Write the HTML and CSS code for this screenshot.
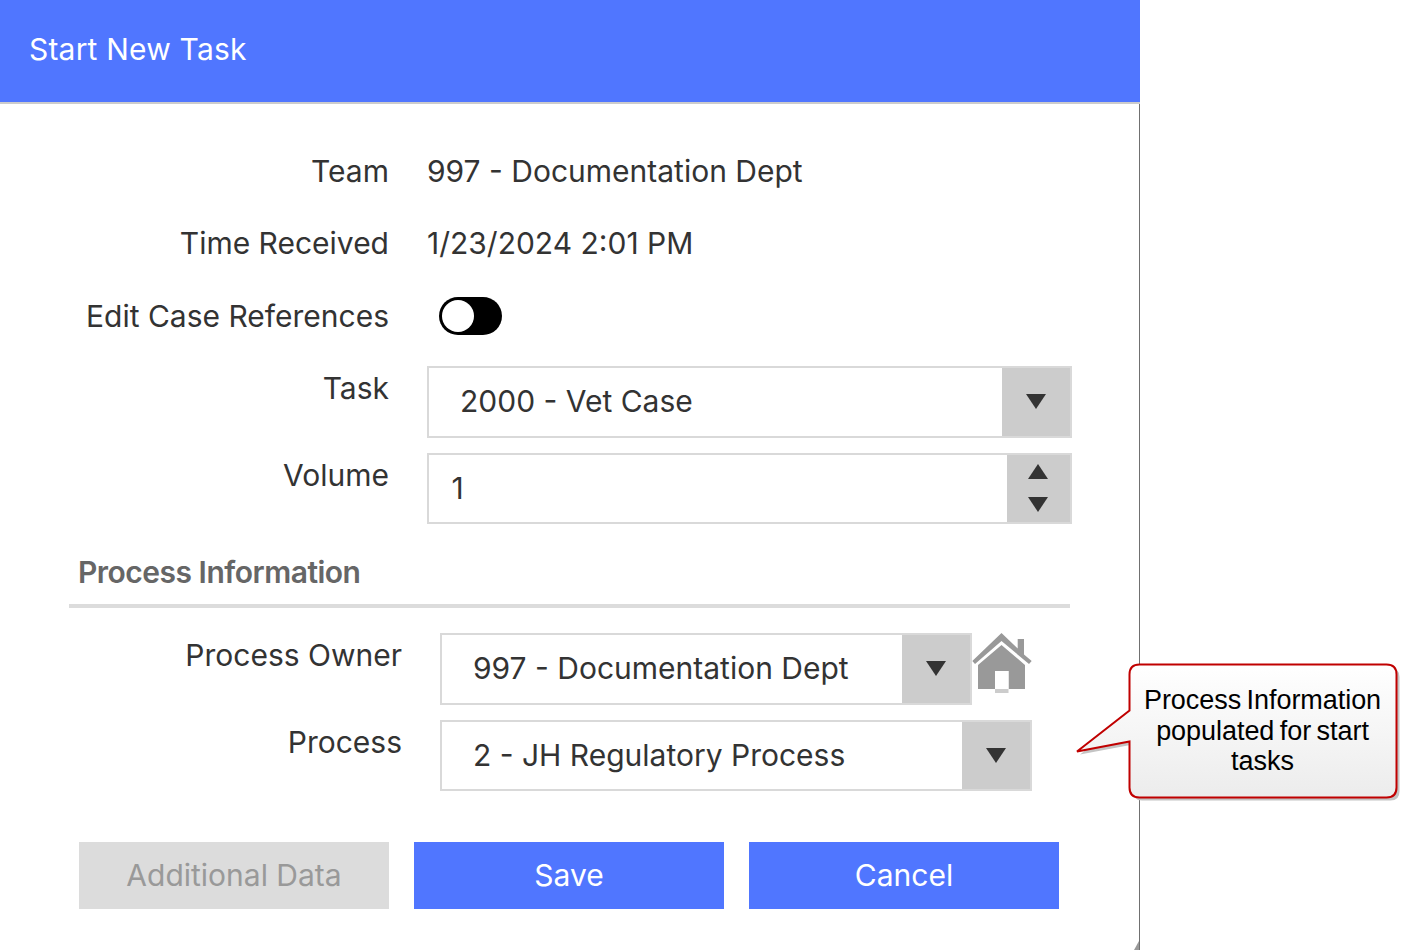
FILE: index.html
```html
<!DOCTYPE html>
<html lang="en">
<head>
<meta charset="utf-8">
<title>Start New Task</title>
<link rel="stylesheet" href="styles.css">
</head>
<body>
<main class="dialog">
  <header class="dialog-header">Start New Task</header>
  <div class="dialog-body">
    <div class="row row-text"><span class="label">Team</span><span class="value">997 - Documentation Dept</span></div>
    <div class="row row-text"><span class="label">Time Received</span><span class="value">1/23/2024 2:01 PM</span></div>
    <div class="row row-text"><span class="label">Edit Case References</span><span class="toggle"><span class="toggle-knob"></span></span></div>
    <div class="row row-field row-task">
      <span class="label">Task</span>
      <div class="field field-main"><span class="field-text">2000 - Vet Case</span><span class="arrow-box"><svg class="tri" viewBox="0 0 20 15" preserveAspectRatio="none"><path d="M0 0H20L10 15Z"/></svg></span></div>
    </div>
    <div class="row row-field row-volume">
      <span class="label">Volume</span>
      <div class="field field-main"><span class="field-text field-text-num">1</span><span class="spin-box"><svg class="tri" viewBox="0 0 20 15" preserveAspectRatio="none"><path d="M0 15H20L10 0Z"/></svg><svg class="tri" viewBox="0 0 20 15" preserveAspectRatio="none"><path d="M0 0H20L10 15Z"/></svg></span></div>
    </div>
    <h2 class="section-title">Process Information</h2>
    <div class="row-proc row-owner">
      <span class="label">Process Owner</span>
      <div class="owner-wrap">
        <div class="field field-owner"><span class="field-text">997 - Documentation Dept</span><span class="arrow-box"><svg class="tri" viewBox="0 0 20 15" preserveAspectRatio="none"><path d="M0 0H20L10 15Z"/></svg></span></div>
        <svg class="home" viewBox="0 0 60 60"><path class="home-shape" d="M0.300 28 29.500 0 45.700 15.500V6H52V21.500L59.700 28 57 31 29.500 8 3 31Z"/><path class="home-shape" d="M6 32 29.500 12 53 32V56H36.500V38H23V56H6Z"/><rect class="home-door" x="23" y="38" width="13.500" height="18"/><rect class="home-step" x="23" y="56" width="13.500" height="4"/></svg>
      </div>
    </div>
    <div class="row-proc row-process">
      <span class="label">Process</span>
      <div class="field field-process"><span class="field-text">2 - JH Regulatory Process</span><span class="arrow-box"><svg class="tri" viewBox="0 0 20 15" preserveAspectRatio="none"><path d="M0 0H20L10 15Z"/></svg></span></div>
    </div>
    <div class="actions">
      <button class="btn btn-disabled" type="button">Additional Data</button>
      <button class="btn" type="button">Save</button>
      <button class="btn" type="button">Cancel</button>
    </div>
  </div>
</main>
<aside class="callout">
  <svg class="callout-shape" viewBox="0 0 330 145">
    <defs>
      <linearGradient id="cg" x1="0" y1="0" x2="0" y2="1"><stop offset="0" stop-color="#ffffff"/><stop offset="1" stop-color="#ececec"/></linearGradient>
    </defs>
    <path class="callout-shadow" d="M57 14Q57 5 66 5H314.500Q323.500 5 323.500 14V128.500Q323.500 137.500 314.500 137.500H66Q57 137.500 57 128.500V81.500L4 91.500 57 50.500Z"/>
    <path class="callout-fill" fill="url(#cg)" d="M53.500 11.500Q53.500 1.500 63.500 1.500H310.500Q320.500 1.500 320.500 11.500V124.500Q320.500 134.500 310.500 134.500H63.500Q53.500 134.500 53.500 124.500V78.500L1 88.500 53.500 47.500Z"/>
  </svg>
  <p class="callout-text">Process Information populated for start tasks</p>
</aside>
</body>
</html>
```
FILE: styles.css
```css
* { box-sizing: border-box; }
html, body { margin: 0; padding: 0; background: #fff; }
body {
  width: 1411px;
  height: 950px;
  overflow: hidden;
  position: relative;
  font-family: Inter, "Liberation Sans", sans-serif;
  color: #333;
}
.dialog {
  position: relative;
  width: 1140px;
  height: 950px;
  border-right: 1px solid #707070;
}
.dialog::after {
  content: "";
  position: absolute;
  right: 0;
  bottom: 0;
  width: 5px;
  height: 9px;
  background: #999;
  clip-path: polygon(100% 0, 100% 100%, 0 100%);
}
.dialog-header {
  height: 104px;
  margin-right: -1px;
  background: #5076ff;
  border-bottom: 2px solid #ccc;
  color: #fff;
  font-size: 30px;
  letter-spacing: 0.200px;
  line-height: 98px;
  padding-left: 29px;
}
.dialog-body { padding-top: 31px; font-size: 30px; }
.row { display: grid; grid-template-columns: 389px 1fr; column-gap: 38px; }
.row-text { height: 72.300px; align-items: center; }
.label { text-align: right; }
.value { line-height: 36px; }
.toggle {
  width: 63px;
  height: 38px;
  margin-left: 12px;
  background: #000;
  border-radius: 19px;
  padding: 3px;
  display: block;
}
.toggle-knob { display: block; width: 32px; height: 32px; border-radius: 50%; background: #fff; }
.row-field { width: 1072px; }
.row-task { margin-top: 14.100px; }
.row-volume { margin-top: 15px; }
.row-field .label { line-height: 44px; }
.row-proc .label { line-height: 44px; }
.field {
  display: flex;
  align-items: stretch;
  border: 2px solid #d9d9d9;
  background: #fff;
}
.field-main { height: 72px; }
.row-volume .field-main { height: 71px; }
.field-text { flex: 1; padding-left: 31px; line-height: 67px; }
.field-text-num { padding-left: 22.500px; }
.arrow-box {
  width: 68px;
  background: #ccc;
  display: flex;
  align-items: center;
  justify-content: center;
}
.spin-box {
  width: 63px;
  background: #ccc;
  display: flex;
  flex-direction: column;
  align-items: center;
  justify-content: center;
  gap: 18px;
  padding-right: 1px;
}
.tri { width: 20px; height: 15px; display: block; fill: #333; }
.section-title {
  margin: 29px 2px 0 69px;
  width: 1001px;
  padding: 0 0 13px 9px;
  border-bottom: 4px solid #dcdcdc;
  font-size: 30px;
  font-weight: 600;
  line-height: 38px;
  color: #666;
  letter-spacing: -0.500px;
}
.row-proc { display: grid; grid-template-columns: 402px 1fr; column-gap: 38px; }
.row-owner { margin-top: 25px; }
.row-process { margin-top: 15px; }
.owner-wrap { display: flex; align-items: flex-start; }
.field-owner { width: 532px; height: 72px; }
.field-process { width: 592px; height: 71px; }
.home { width: 60px; height: 60px; display: block; }
.home-shape { fill: #999; }
.home-door { fill: #fff; }
.home-step { fill: #ccc; }
.actions { display: flex; gap: 25px; margin: 51px 0 0 79px; }
.btn {
  width: 310px;
  height: 67px;
  border: 0;
  background: #5076ff;
  color: #fff;
  font: inherit;
  padding: 0;
}
.btn-disabled { background: #dcdcdc; color: #999; }
.callout { position: absolute; left: 1076px; top: 663px; width: 330px; height: 145px; }
.callout-shape { position: absolute; left: 0; top: 0; width: 330px; height: 145px; }
.callout-shadow { fill: #c4c4c4; }
.callout-fill { stroke: #c00000; stroke-width: 2; }
.callout-text {
  margin: 0;
  position: absolute;
  left: 62px;
  top: 22px;
  width: 249px;
  text-align: center;
  font-family: "Liberation Sans", Arial, sans-serif;
  font-size: 27px;
  line-height: 30.500px;
  letter-spacing: -0.050px;
  word-spacing: -2px;
  color: #000;
}
```
